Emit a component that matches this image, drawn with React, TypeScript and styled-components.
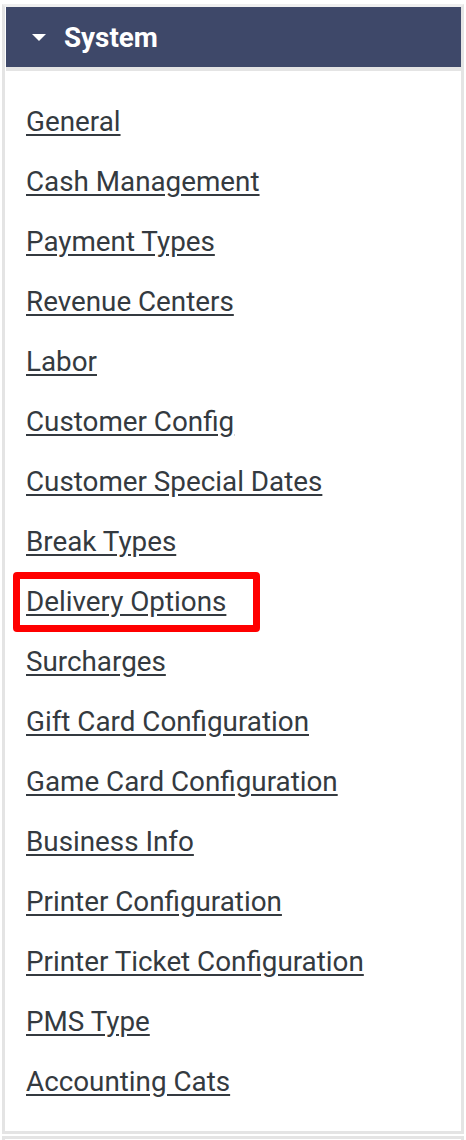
import styled, { createGlobalStyle } from "styled-components";

const GlobalStyle = createGlobalStyle`
  body {
    margin: 0;
    background: #ffffff;
    font-family: Roboto, "Liberation Sans", Arial, sans-serif;
  }
`;

const links = [
  "General",
  "Cash Management",
  "Payment Types",
  "Revenue Centers",
  "Labor",
  "Customer Config",
  "Customer Special Dates",
  "Break Types",
  "Delivery Options",
  "Surcharges",
  "Gift Card Configuration",
  "Game Card Configuration",
  "Business Info",
  "Printer Configuration",
  "Printer Ticket Configuration",
  "PMS Type",
  "Accounting Cats",
];

const App = () => {
  return (
    <Page>
      <GlobalStyle />
      <Panel>
        <Header>
          <Caret />
          <Title>System</Title>
        </Header>
        <List>
          {links.map((label) => (
            <Item key={label}>
              <Link href="#" highlighted={label === "Delivery Options"}>
                {label}
              </Link>
            </Item>
          ))}
        </List>
      </Panel>
      <NextPanel />
    </Page>
  );
};

export default App;

const Page = styled.div`
  width: 466px;
  height: 1140px;
  padding-top: 4px;
  box-sizing: border-box;
  overflow: hidden;
`;

const Panel = styled.div`
  margin: 0 2px;
  border: 3px solid #e4e4e4;
  border-top-color: #efefef;
  background: #fff;
`;

const Header = styled.div`
  display: flex;
  align-items: center;
  height: 60px;
  margin-left: 1px;
  padding-left: 26px;
  background-color: #3e4869;
  border-bottom: 4px solid #e4e4e4;
`;

const Caret = styled.span`
  width: 0;
  height: 0;
  border-left: 7px solid transparent;
  border-right: 7px solid transparent;
  border-top: 7px solid #ffffff;
  margin-right: 18px;
`;

const Title = styled.div`
  color: #ffffff;
  font-weight: 700;
  font-size: 27.8px;
`;

const List = styled.ul`
  list-style: none;
  margin: 0;
  padding: 20px 0;
`;

const Item = styled.li`
  height: 60px;
  display: flex;
  align-items: center;
  padding-left: 21px;
`;

const Link = styled.a<{ highlighted?: boolean }>`
  position: relative;
  color: #343a40;
  font-size: 27.8px;
  text-decoration: underline;
  text-underline-offset: 3px;

  ${({ highlighted }) =>
    highlighted &&
    `
    &::after {
      content: "";
      position: absolute;
      left: -13px;
      right: -34px;
      top: -13px;
      bottom: -14px;
      border: 7px solid #ff0000;
      border-radius: 4px;
    }
  `}
`;

const NextPanel = styled.div`
  margin: 2px 2px 0;
  height: 20px;
  border: 3px solid #e4e4e4;
`;
